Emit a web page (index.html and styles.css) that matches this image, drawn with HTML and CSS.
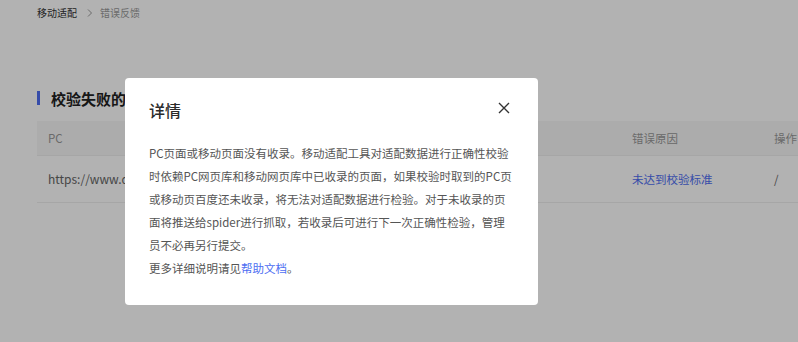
FILE: index.html
```html
<!DOCTYPE html>
<html lang="zh-CN">
<head>
<meta charset="utf-8">
<title>错误反馈</title>
<link rel="stylesheet" href="styles.css">
</head>
<body>
<div class="page">
  <div class="breadcrumb">
    <span class="crumb-main">移动适配</span>
    <svg class="crumb-sep" width="6" height="8" viewBox="0 0 6 8"><path d="M1 0.5 L4.5 4 L1 7.5" fill="none" stroke="#999" stroke-width="1"/></svg>
    <span class="crumb-cur">错误反馈</span>
  </div>
  <h2 class="section-title"><span class="bar"></span>校验失败的页面</h2>
  <table class="table">
    <thead>
      <tr><th class="c1">PC</th><th class="c2">错误原因</th><th class="c3">操作</th></tr>
    </thead>
    <tbody>
      <tr><td class="c1"><span class="url">https://www.qixin.com/</span></td><td class="c2 link">未达到校验标准</td><td class="c3">/</td></tr>
    </tbody>
  </table>
</div>
<div class="mask">
  <div class="modal">
    <div class="modal-head">
      <span class="modal-title">详情</span>
      <span class="close"><svg width="12" height="12" viewBox="0 0 12 12"><path d="M1 1 L11 11 M11 1 L1 11" stroke="#333" stroke-width="1.4" fill="none"/></svg></span>
    </div>
    <div class="modal-body">
      <p>PC页面或移动页面没有收录。移动适配工具对适配数据进行正确性校验<br>时依赖PC网页库和移动网页库中已收录的页面，如果校验时取到的PC页<br>或移动页百度还未收录，将无法对适配数据进行检验。对于未收录的页<br>面将推送给spider进行抓取，若收录后可进行下一次正确性检验，管理<br>员不必再另行提交。</p>
      <p>更多详细说明请见<a class="help">帮助文档</a>。</p>
    </div>
  </div>
</div>
</body>
</html>
```
FILE: styles.css
```css
* { box-sizing: border-box; }
html, body { margin: 0; padding: 0; background: #fff; }
body {
  font-family: "Noto Sans CJK SC", "Microsoft YaHei", sans-serif;
  color: #333;
  overflow: hidden;
  width: 798px;
  height: 342px;
}
.page { padding: 0 0 0 37px; width: 1000px; }
.breadcrumb {
  height: 26px;
  display: flex;
  align-items: center;
  font-size: 10px;
  line-height: 26px;
}
.crumb-main { color: #333; }
.crumb-sep { margin: 0 7px 0 10px; }
.crumb-cur { color: #999; }
.section-title {
  margin: 62px 0 0;
  height: 20px;
  display: flex;
  align-items: center;
  font-size: 15px;
  font-weight: bold;
  color: #222;
}
.bar {
  width: 3px;
  height: 14px;
  background: #4e6ef2;
  margin-right: 11px;
}
.table {
  margin-top: 13px;
  border-collapse: collapse;
  font-size: 11.5px;
  table-layout: fixed;
  width: 900px;
}
.table th {
  height: 34px;
  background: #f7f7f7;
  font-weight: normal;
  color: #999;
  text-align: left;
  padding: 0 0 0 11px;
  border-bottom: 1px solid #eee;
}
.table td {
  height: 47px;
  color: #666;
  text-align: left;
  padding: 0 0 0 11px;
  border-bottom: 1px solid #eee;
  white-space: nowrap;
}
.table .c1 { width: 584px; }
.table .c2 { width: 142px; }
.url { font-size: 12px; }
.table .link { color: #4e6ef2; }
.mask {
  position: fixed;
  inset: 0;
  background: rgba(0, 0, 0, 0.3);
  padding: 78px 0 0 125px;
}
.modal {
  width: 413px;
  height: 227px;
  background: #fff;
  border-radius: 4px;
  padding: 20px 24px 0 24px;
}
.modal-head {
  height: 24px;
  display: flex;
  align-items: center;
  justify-content: space-between;
}
.modal-title {
  font-size: 16px;
  line-height: 24px;
  color: #2b2b2b;
  font-weight: 500;
}
.close {
  width: 20px;
  height: 20px;
  display: flex;
  align-items: center;
  justify-content: center;
  position: relative;
  top: -2px;
}
.modal-body {
  margin-top: 20px;
  font-size: 11.5px;
  line-height: 23px;
  color: #555;
  white-space: nowrap;
}
.modal-body p { margin: 0; }
.help { color: #4e6ef2; }
```
